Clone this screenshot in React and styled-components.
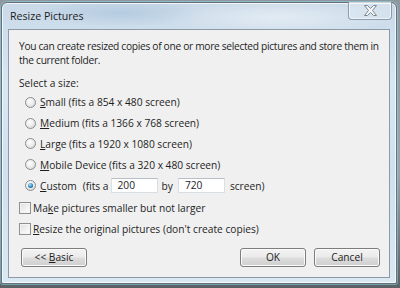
import React from "react";
import styled, { createGlobalStyle } from "styled-components";

const GlobalStyle = createGlobalStyle`
  html, body {
    margin: 0;
    padding: 0;
    background: #6f777c;
  }
  body {
    width: 400px;
    height: 288px;
    overflow: hidden;
    font-family: "Open Sans", "Noto Sans", sans-serif;
  }
`;

const Screen = styled.div`
  width: 400px;
  height: 288px;
  padding: 2px 3px 4px 1px;
  box-sizing: border-box;
  background: linear-gradient(180deg, #8e979d 0%, #9aa4aa 60%, #5b6266 100%);
`;

const Frame = styled.div`
  height: 100%;
  box-sizing: border-box;
  border: 1px solid #65707a;
  border-radius: 6px 6px 2px 2px;
  box-shadow: inset 0 0 0 1px rgba(255, 255, 255, 0.75), 0 0 0 1px rgba(140, 220, 240, 0.5);
  background:
    radial-gradient(ellipse 120px 18px at 70% 14px, rgba(255, 255, 255, 0.45), transparent),
    radial-gradient(ellipse 90px 14px at 30% 10px, rgba(160, 190, 215, 0.5), transparent),
    linear-gradient(180deg, #c9d9e8 0%, #d8e7f4 30%, #cfe0ef 60%, #dae8f3 100%);
  display: flex;
  flex-direction: column;
  padding: 0 6px 5px 6px;
`;

const TitleBar = styled.div`
  height: 26px;
  display: flex;
  align-items: flex-start;
  justify-content: space-between;
`;

const Title = styled.span`
  font-size: 10.6px;
  color: #1c1c1c;
  padding: 6px 0 0 2px;
`;

const CloseButton = styled.div`
  width: 44px;
  height: 18px;
  margin-top: -1px;
  margin-right: -2px;
  box-sizing: border-box;
  border: 1px solid rgba(110, 125, 140, 0.7);
  border-top: none;
  border-radius: 0 0 4px 4px;
  box-shadow: inset 0 0 0 1px rgba(255, 255, 255, 0.6);
  background: linear-gradient(180deg, rgba(255, 255, 255, 0.25), rgba(220, 235, 245, 0.35));
  display: flex;
  align-items: center;
  justify-content: center;
`;

const Panel = styled.div`
  flex: 1;
  border: 1px solid #8d99a4;
  background: #f0f0f0;
  padding: 9px 9px 10px 10px;
  display: flex;
  flex-direction: column;
  font-size: 10.2px;
  color: #1e1e1e;
`;

const Intro = styled.p`
  margin: 0;
  line-height: 14px;
  white-space: nowrap;
  letter-spacing: -0.3px;
`;

const Heading = styled.p`
  margin: 9px 0 0;
  line-height: 14px;
`;

const Options = styled.div`
  display: flex;
  flex-direction: column;
  margin-top: ${(p) => p.top}px;
  padding-left: ${(p) => p.indent}px;
`;

const Row = styled.label`
  height: 20.8px;
  display: flex;
  align-items: center;
  white-space: pre;
`;

const Radio = styled.span`
  width: 11px;
  height: 11px;
  border-radius: 50%;
  box-sizing: border-box;
  border: 1px solid #8a8c8e;
  background: radial-gradient(circle at 40% 35%, #ffffff 0%, #eeeeee 45%, #cdcdcd 100%);
  margin-right: 4px;
  display: flex;
  align-items: center;
  justify-content: center;
  &::after {
    content: "";
    display: ${(p) => (p.checked ? "block" : "none")};
    width: 5px;
    height: 5px;
    border-radius: 50%;
    background: radial-gradient(circle at 40% 35%, #b9e6f8 0%, #2a86c2 55%, #0d4a7a 100%);
  }
`;

const Check = styled.span`
  width: 12px;
  height: 12px;
  box-sizing: border-box;
  border: 1px solid #8e8f8f;
  background: linear-gradient(135deg, #dedede 0%, #f6f6f6 70%, #ffffff 100%);
  box-shadow: inset 0 0 0 1px #f4f4f4;
  margin-right: 2px;
`;

const Key = styled.u`
  text-decoration-thickness: 1px;
  text-underline-offset: 1px;
`;

const Gap = styled.span`
  width: ${(p) => p.w}px;
`;

const SizeInput = styled.span`
  width: 47px;
  height: 15px;
  box-sizing: border-box;
  border: 1px solid #dadfe4;
  border-top-color: #b8bfc6;
  background: #ffffff;
  padding-left: 6px;
  line-height: 13px;
`;

const Buttons = styled.div`
  margin-top: auto;
  display: flex;
  gap: 8px;
  padding-left: 2px;
`;

const Button = styled.div`
  width: 66px;
  height: 19px;
  box-sizing: border-box;
  border: 1px solid #7d7d7d;
  border-radius: 3px;
  box-shadow: inset 0 0 0 1px #fbfbfb;
  background: linear-gradient(180deg, #f3f3f3 0%, #ebebeb 48%, #dddddd 52%, #cfcfcf 100%);
  display: flex;
  align-items: center;
  justify-content: center;
  white-space: pre;
  line-height: 1;
  &:first-child {
    margin-right: auto;
  }
`;

const CloseGlyph = () => (
  <svg width="15" height="13" viewBox="0 0 15 13">
    <path
      d="M1.5 1.5 L4.5 1.5 L7.5 4.5 L10.5 1.5 L13.5 1.5 L9.5 6.5 L13.5 11.5 L10.5 11.5 L7.5 8.5 L4.5 11.5 L1.5 11.5 L5.5 6.5 Z"
      fill="#f4f6f8"
      stroke="#7d8790"
      strokeWidth="1"
      strokeLinejoin="round"
    />
  </svg>
);

const radios = [
  { key: "S", rest: "mall (fits a 854 x 480 screen)" },
  { key: "M", rest: "edium (fits a 1366 x 768 screen)" },
  { key: "L", rest: "arge (fits a 1920 x 1080 screen)" },
  { key: "M", rest: "obile Device (fits a 320 x 480 screen)" },
];

export default function App() {
  return (
    <>
      <GlobalStyle />
      <Screen>
        <Frame>
          <TitleBar>
            <Title>Resize Pictures</Title>
            <CloseButton>
              <CloseGlyph />
            </CloseButton>
          </TitleBar>
          <Panel>
            <Intro>
              You can create resized copies of one or more selected pictures and store them in
              <br />
              the current folder.
            </Intro>
            <Heading>Select a size:</Heading>
            <Options indent={6} top={2}>
              {radios.map((r, i) => (
                <Row key={i}>
                  <Radio />
                  <Key>{r.key}</Key>
                  {r.rest}
                </Row>
              ))}
              <Row>
                <Radio checked />
                <Key>C</Key>
                ustom
                <Gap w={6} />
                (fits a
                <Gap w={2} />
                <SizeInput>200</SizeInput>
                <Gap w={4} />
                by
                <Gap w={5} />
                <SizeInput>720</SizeInput>
                <Gap w={5} />
                screen)
              </Row>
            </Options>
            <Options indent={0} top={2}>
              <Row>
                <Check />
                Ma<Key>k</Key>e pictures smaller but not larger
              </Row>
              <Row>
                <Check />
                <Key>R</Key>esize the original pictures (don't create copies)
              </Row>
            </Options>
            <Buttons>
              <Button>
                {"<< "}
                <Key>B</Key>asic
              </Button>
              <Button>OK</Button>
              <Button>Cancel</Button>
            </Buttons>
          </Panel>
        </Frame>
      </Screen>
    </>
  );
}
